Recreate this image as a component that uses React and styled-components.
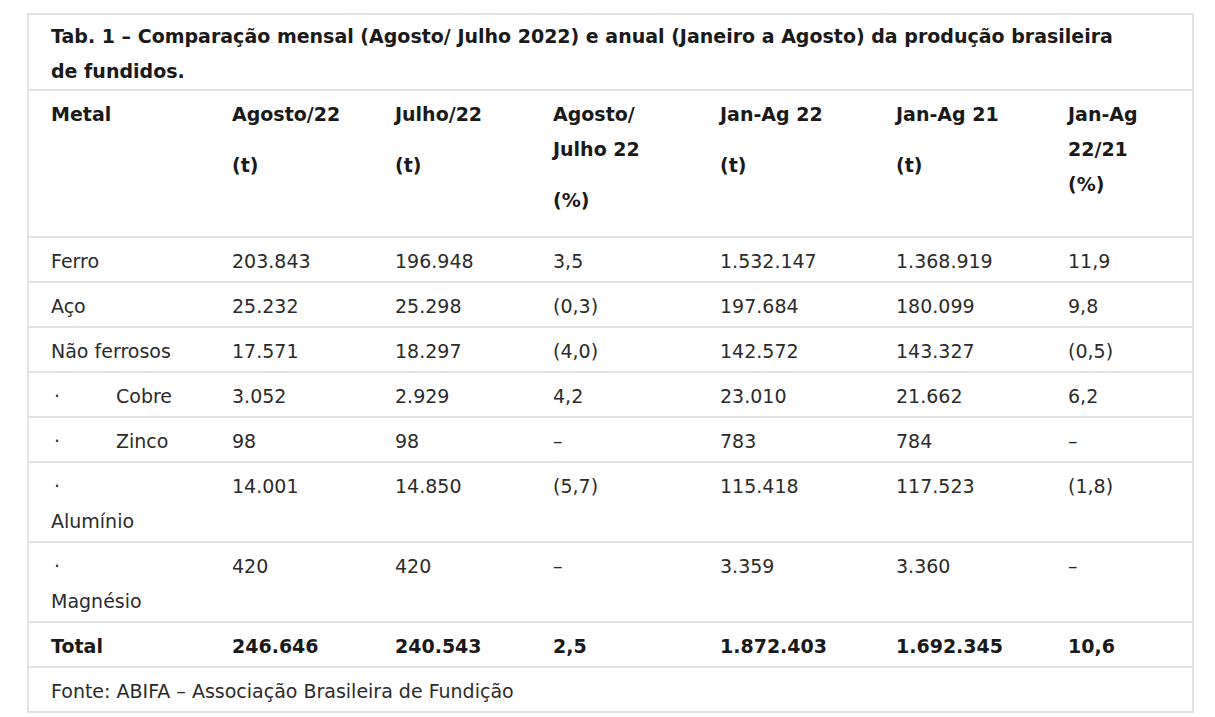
import React from 'react';
import styled, { createGlobalStyle } from 'styled-components';

const GlobalStyle = createGlobalStyle`
  body {
    margin: 0;
    background: #ffffff;
    font-family: "DejaVu Sans", Verdana, sans-serif;
    color: #222222;
  }
`;

const Page = styled.div`
  padding: 13px 0 0 27px;
`;

const Table = styled.table`
  width: 1165px;
  border-collapse: collapse;
  border: 2px solid #e2e2e2;
  table-layout: fixed;
  font-size: 19px;
  line-height: 35px;
`;

const Row = styled.tr`
  border-bottom: 2px solid #e2e2e2;
`;

const Cell = styled.td`
  padding: ${(p) => (p.$head ? '6px 12px 18px 22px' : '6px 12px 2px 22px')};
  vertical-align: top;
  font-weight: ${(p) => (p.$bold ? 700 : 400)};
  color: ${(p) => (p.$bold ? '#1a1a1a' : '#2b2b2b')};
  white-space: ${(p) => (p.$nowrap ? 'nowrap' : 'normal')};
`;

const Caption = styled.td`
  padding: 4px 60px 0 22px;
  font-weight: 700;
  color: #1a1a1a;
`;

const Para = styled.div`
  & + & {
    margin-top: 16px;
  }
`;

const Line = styled.span`
  display: block;
`;

const Bullet = styled.span`
  display: inline-block;
  width: ${(p) => (p.$stacked ? 'auto' : '65px')};
  padding-left: 3px;
  box-sizing: border-box;
`;

const SubName = styled.span`
  display: ${(p) => (p.$stacked ? 'block' : 'inline')};
`;

const Source = styled.td`
  padding: 6px 22px 2px;
  color: #2b2b2b;
`;

const widths = [182, 163, 158, 167, 176, 172, 147];

// each header: list of paragraphs, each paragraph a list of lines
const headers = [
  [['Metal']],
  [['Agosto/22'], ['(t)']],
  [['Julho/22'], ['(t)']],
  [['Agosto/', 'Julho 22'], ['(%)']],
  [['Jan-Ag 22'], ['(t)']],
  [['Jan-Ag 21'], ['(t)']],
  [['Jan-Ag', '22/21', '(%)']],
];

const rows = [
  { name: 'Ferro', values: ['203.843', '196.948', '3,5', '1.532.147', '1.368.919', '11,9'] },
  { name: 'Aço', values: ['25.232', '25.298', '(0,3)', '197.684', '180.099', '9,8'] },
  { name: 'Não ferrosos', values: ['17.571', '18.297', '(4,0)', '142.572', '143.327', '(0,5)'] },
  { name: 'Cobre', sub: true, values: ['3.052', '2.929', '4,2', '23.010', '21.662', '6,2'] },
  { name: 'Zinco', sub: true, values: ['98', '98', '–', '783', '784', '–'] },
  { name: 'Alumínio', sub: true, stacked: true, values: ['14.001', '14.850', '(5,7)', '115.418', '117.523', '(1,8)'] },
  { name: 'Magnésio', sub: true, stacked: true, values: ['420', '420', '–', '3.359', '3.360', '–'] },
];

const total = ['246.646', '240.543', '2,5', '1.872.403', '1.692.345', '10,6'];

function MetalName({ row }) {
  if (!row.sub) return row.name;
  return (
    <>
      <Bullet $stacked={row.stacked}>·</Bullet>
      <SubName $stacked={row.stacked}>{row.name}</SubName>
    </>
  );
}

export default function App() {
  return (
    <Page>
      <GlobalStyle />
      <Table>
        <colgroup>
          {widths.map((w, i) => (
            <col key={i} style={{ width: w }} />
          ))}
        </colgroup>
        <tbody>
          <Row>
            <Caption colSpan={7}>
              Tab. 1 – Comparação mensal (Agosto/ Julho 2022) e anual (Janeiro a Agosto) da produção brasileira de fundidos.
            </Caption>
          </Row>
          <Row>
            {headers.map((h, i) => (
              <Cell key={i} $head $bold>
                {h.map((para, j) => (
                  <Para key={j}>
                    {para.map((line, k) => (
                      <Line key={k}>{line}</Line>
                    ))}
                  </Para>
                ))}
              </Cell>
            ))}
          </Row>
          {rows.map((row) => (
            <Row key={row.name}>
              <Cell>
                <MetalName row={row} />
              </Cell>
              {row.values.map((v, i) => (
                <Cell key={i} $nowrap>
                  {v}
                </Cell>
              ))}
            </Row>
          ))}
          <Row>
            <Cell $bold>Total</Cell>
            {total.map((v, i) => (
              <Cell key={i} $bold $nowrap>
                {v}
              </Cell>
            ))}
          </Row>
          <Row>
            <Source colSpan={7}>Fonte: ABIFA – Associação Brasileira de Fundição</Source>
          </Row>
        </tbody>
      </Table>
    </Page>
  );
}
